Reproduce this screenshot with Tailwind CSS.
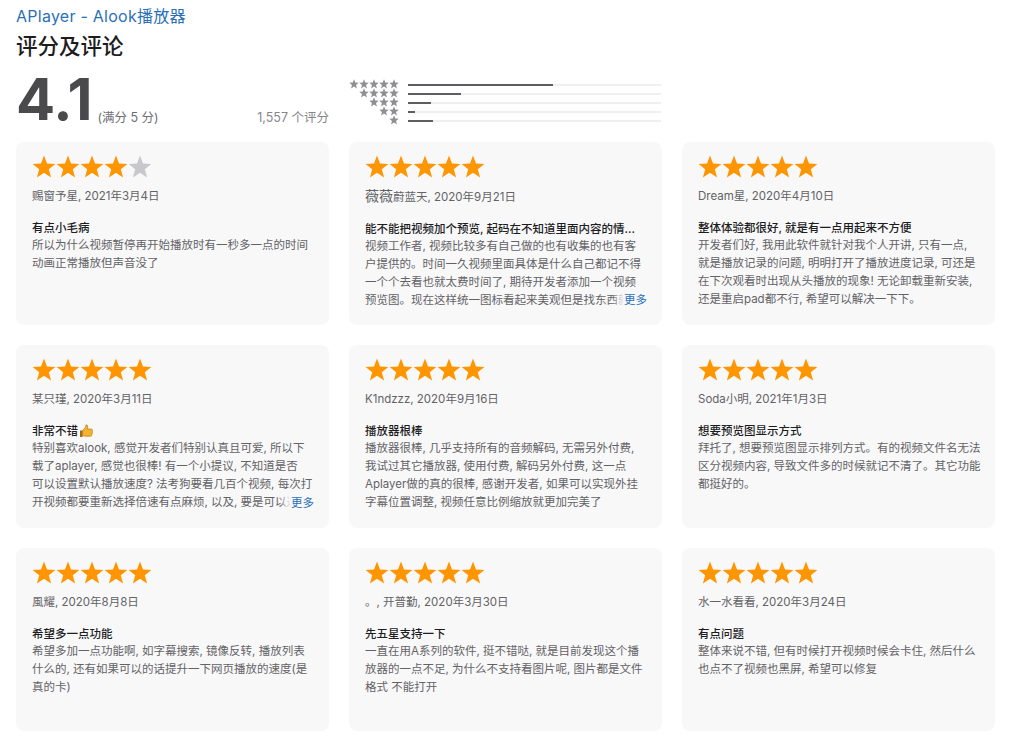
<!DOCTYPE html>
<html lang="zh-CN">
<head>
<meta charset="UTF-8">
<title>APlayer - Alook播放器</title>
<script src="https://cdn.jsdelivr.net/npm/@tailwindcss/browser@4"></script>
</head>
<body class="bg-white font-['Inter','Noto_Sans_CJK_SC',sans-serif] overflow-hidden">
<svg class="hidden"><defs><polygon id="star" points="12,0.5 15,8.6 23.4,8.9 16.8,14.2 19.1,22.6 12,17.8 4.9,22.6 7.2,14.2 0.6,8.9 9,8.6"/></defs></svg>

<div class="w-[1011px] h-[742px] px-4 pt-[6px]">
  <!-- Header -->
  <div class="text-[16px] leading-5 text-[#2a70b8] tracking-[0.25px]">APlayer - Alook播放器</div>
  <h1 class="mt-[4px] text-[21.5px] leading-8 font-medium text-[#1d1d1f]">评分及评论</h1>

  <!-- Rating summary -->
  <div class="flex h-[62px] mt-[3px]">
    <div class="w-[313px] flex items-end">
      <span class="text-[58px] leading-[62px] font-bold text-[#4a4a4d] mb-[-3px]">4.1</span>
      <span class="ml-[5px] mb-px text-[12.5px] leading-4 text-[#6e6e73]">(满分 5 分)</span>
      <span class="ml-auto mb-px text-[12.5px] leading-4 text-[#86868b]">1,557 个评分</span>
    </div>
    <div class="ml-5 w-[313px] flex flex-col pt-[15px]">
      <div class="flex items-center h-[9px]"><svg class="w-[50px] h-[10px] shrink-0 -translate-y-px fill-[#8e8e93]" viewBox="0 0 120 24"><use href="#star"/><use href="#star" x="24"/><use href="#star" x="48"/><use href="#star" x="72"/><use href="#star" x="96"/></svg><div class="ml-[9px] w-[253px] h-[2px] bg-[#f0f0f2]"><div class="w-[145px] h-[2px] bg-[#5e5e62]"></div></div></div>
      <div class="flex items-center h-[9px]"><svg class="w-[50px] h-[10px] shrink-0 -translate-y-px fill-[#8e8e93]" viewBox="0 0 120 24"><use href="#star" x="24"/><use href="#star" x="48"/><use href="#star" x="72"/><use href="#star" x="96"/></svg><div class="ml-[9px] w-[253px] h-[2px] bg-[#f0f0f2]"><div class="w-[53px] h-[2px] bg-[#5e5e62]"></div></div></div>
      <div class="flex items-center h-[9px]"><svg class="w-[50px] h-[10px] shrink-0 -translate-y-px fill-[#8e8e93]" viewBox="0 0 120 24"><use href="#star" x="48"/><use href="#star" x="72"/><use href="#star" x="96"/></svg><div class="ml-[9px] w-[253px] h-[2px] bg-[#f0f0f2]"><div class="w-[23px] h-[2px] bg-[#5e5e62]"></div></div></div>
      <div class="flex items-center h-[9px]"><svg class="w-[50px] h-[10px] shrink-0 -translate-y-px fill-[#8e8e93]" viewBox="0 0 120 24"><use href="#star" x="72"/><use href="#star" x="96"/></svg><div class="ml-[9px] w-[253px] h-[2px] bg-[#f0f0f2]"><div class="w-[7px] h-[2px] bg-[#5e5e62]"></div></div></div>
      <div class="flex items-center h-[9px]"><svg class="w-[50px] h-[10px] shrink-0 -translate-y-px fill-[#8e8e93]" viewBox="0 0 120 24"><use href="#star" x="96"/></svg><div class="ml-[9px] w-[253px] h-[2px] bg-[#f0f0f2]"><div class="w-[25px] h-[2px] bg-[#5e5e62]"></div></div></div>
    </div>
  </div>

  <!-- Review cards -->
  <div class="grid grid-cols-[313px_313px_313px] grid-rows-[183px_183px_183px] gap-x-5 gap-y-[20px] mt-[15px] text-[11.5px] leading-[18px] whitespace-nowrap">

    <div class="relative bg-[#f8f8f9] rounded-lg px-4 pt-[13px]">
      <svg class="w-[120px] h-6 fill-[#ff9500]" viewBox="0 0 120 24"><use href="#star"/><use href="#star" x="24"/><use href="#star" x="48"/><use href="#star" x="72"/><use href="#star" x="96" class="fill-[#c7c7cc]"/></svg>
      <div class="mt-[8px] text-[#636366]">赐窗予星, 2021年3月4日</div>
      <div class="mt-[14px] -mb-px font-medium text-[#1d1d1f]">有点小毛病</div>
      <div class="text-[#636366]">所以为什么视频暂停再开始播放时有一秒多一点的时间<br>动画正常播放但声音没了</div>
    </div>

    <div class="relative bg-[#f8f8f9] rounded-lg px-4 pt-[13px]">
      <svg class="w-[120px] h-6 fill-[#ff9500]" viewBox="0 0 120 24"><use href="#star"/><use href="#star" x="24"/><use href="#star" x="48"/><use href="#star" x="72"/><use href="#star" x="96"/></svg>
      <div class="mt-[8px] text-[#636366]"><span class="text-[14px]">薇薇</span>蔚蓝天, 2020年9月21日</div>
      <div class="mt-[14px] -mb-px font-medium text-[#1d1d1f]">能不能把视频加个预览, 起码在不知道里面内容的情…</div>
      <div class="text-[#636366]">视频工作者, 视频比较多有自己做的也有收集的也有客<br>户提供的。时间一久视频里面具体是什么自己都记不得<br>一个个去看也就太费时间了, 期待开发者添加一个视频<br>预览图。现在这样统一图标看起来美观但是找东西就</div>
      <div class="absolute right-[15px] bottom-[16px] pl-[12px] bg-gradient-to-r from-transparent to-[#f8f8f9] to-[35%] text-[#2a70b8]">更多</div>
    </div>

    <div class="relative bg-[#f8f8f9] rounded-lg px-4 pt-[13px]">
      <svg class="w-[120px] h-6 fill-[#ff9500]" viewBox="0 0 120 24"><use href="#star"/><use href="#star" x="24"/><use href="#star" x="48"/><use href="#star" x="72"/><use href="#star" x="96"/></svg>
      <div class="mt-[8px] text-[#636366]">Dream星, 2020年4月10日</div>
      <div class="mt-[14px] -mb-px font-medium text-[#1d1d1f]">整体体验都很好, 就是有一点用起来不方便</div>
      <div class="text-[#636366]">开发者们好, 我用此软件就针对我个人开讲, 只有一点,<br>就是播放记录的问题, 明明打开了播放进度记录, 可还是<br>在下次观看时出现从头播放的现象! 无论卸载重新安装,<br>还是重启pad都不行, 希望可以解决一下下。</div>
    </div>

    <div class="relative bg-[#f8f8f9] rounded-lg px-4 pt-[13px]">
      <svg class="w-[120px] h-6 fill-[#ff9500]" viewBox="0 0 120 24"><use href="#star"/><use href="#star" x="24"/><use href="#star" x="48"/><use href="#star" x="72"/><use href="#star" x="96"/></svg>
      <div class="mt-[8px] text-[#636366]">某只瑾, 2020年3月11日</div>
      <div class="mt-[14px] -mb-px font-medium text-[#1d1d1f] flex items-center">非常不错<svg class="w-[14px] h-[14px] ml-px" viewBox="0 0 14 14"><path d="M1 6.5h2.6v6.5H1z" fill="#a86a10"/><path d="M3.6 6.6 6.4 3.4 7 .8c1.3 0 2 1 1.7 2.3L8.3 5h3.9c1 0 1.5 1 1 1.8.5.5.5 1.3 0 1.8.3.6.2 1.3-.3 1.7.2.9-.4 1.9-1.4 1.9H6.6c-1.2 0-2-.5-3-.8z" fill="#f5b32e" stroke="#a86a10" stroke-width=".6"/></svg></div>
      <div class="text-[#636366]">特别喜欢alook, 感觉开发者们特别认真且可爱, 所以下<br>载了aplayer, 感觉也很棒! 有一个小提议, 不知道是否<br>可以设置默认播放速度? 法考狗要看几百个视频, 每次打<br>开视频都要重新选择倍速有点麻烦, 以及, 要是可以选</div>
      <div class="absolute right-[15px] bottom-[16px] pl-[12px] bg-gradient-to-r from-transparent to-[#f8f8f9] to-[35%] text-[#2a70b8]">更多</div>
    </div>

    <div class="relative bg-[#f8f8f9] rounded-lg px-4 pt-[13px]">
      <svg class="w-[120px] h-6 fill-[#ff9500]" viewBox="0 0 120 24"><use href="#star"/><use href="#star" x="24"/><use href="#star" x="48"/><use href="#star" x="72"/><use href="#star" x="96"/></svg>
      <div class="mt-[8px] text-[#636366]">K1ndzzz, 2020年9月16日</div>
      <div class="mt-[14px] -mb-px font-medium text-[#1d1d1f]">播放器根棒</div>
      <div class="text-[#636366]">播放器很棒, 几乎支持所有的音频解码, 无需另外付费,<br>我试过其它播放器, 使用付费, 解码另外付费, 这一点<br>Aplayer做的真的很棒, 感谢开发者, 如果可以实现外挂<br>字幕位置调整, 视频任意比例缩放就更加完美了</div>
    </div>

    <div class="relative bg-[#f8f8f9] rounded-lg px-4 pt-[13px]">
      <svg class="w-[120px] h-6 fill-[#ff9500]" viewBox="0 0 120 24"><use href="#star"/><use href="#star" x="24"/><use href="#star" x="48"/><use href="#star" x="72"/><use href="#star" x="96"/></svg>
      <div class="mt-[8px] text-[#636366]">Soda小明, 2021年1月3日</div>
      <div class="mt-[14px] -mb-px font-medium text-[#1d1d1f]">想要预览图显示方式</div>
      <div class="text-[#636366]">拜托了, 想要预览图显示排列方式。有的视频文件名无法<br>区分视频内容, 导致文件多的时候就记不清了。其它功能<br>都挺好的。</div>
    </div>

    <div class="relative bg-[#f8f8f9] rounded-lg px-4 pt-[13px]">
      <svg class="w-[120px] h-6 fill-[#ff9500]" viewBox="0 0 120 24"><use href="#star"/><use href="#star" x="24"/><use href="#star" x="48"/><use href="#star" x="72"/><use href="#star" x="96"/></svg>
      <div class="mt-[8px] text-[#636366]">風耀, 2020年8月8日</div>
      <div class="mt-[14px] -mb-px font-medium text-[#1d1d1f]">希望多一点功能</div>
      <div class="text-[#636366]">希望多加一点功能啊, 如字幕搜索, 镜像反转, 播放列表<br>什么的, 还有如果可以的话提升一下网页播放的速度(是<br>真的卡)</div>
    </div>

    <div class="relative bg-[#f8f8f9] rounded-lg px-4 pt-[13px]">
      <svg class="w-[120px] h-6 fill-[#ff9500]" viewBox="0 0 120 24"><use href="#star"/><use href="#star" x="24"/><use href="#star" x="48"/><use href="#star" x="72"/><use href="#star" x="96"/></svg>
      <div class="mt-[8px] text-[#636366]">。, 开普勤, 2020年3月30日</div>
      <div class="mt-[14px] -mb-px font-medium text-[#1d1d1f]">先五星支持一下</div>
      <div class="text-[#636366]">一直在用A系列的软件, 挺不错哒, 就是目前发现这个播<br>放器的一点不足, 为什么不支持看图片呢, 图片都是文件<br>格式 不能打开</div>
    </div>

    <div class="relative bg-[#f8f8f9] rounded-lg px-4 pt-[13px]">
      <svg class="w-[120px] h-6 fill-[#ff9500]" viewBox="0 0 120 24"><use href="#star"/><use href="#star" x="24"/><use href="#star" x="48"/><use href="#star" x="72"/><use href="#star" x="96"/></svg>
      <div class="mt-[8px] text-[#636366]">水一水看看, 2020年3月24日</div>
      <div class="mt-[14px] -mb-px font-medium text-[#1d1d1f]">有点问题</div>
      <div class="text-[#636366]">整体来说不错, 但有时候打开视频时候会卡住, 然后什么<br>也点不了视频也黑屏, 希望可以修复</div>
    </div>

  </div>
</div>
</body>
</html>
